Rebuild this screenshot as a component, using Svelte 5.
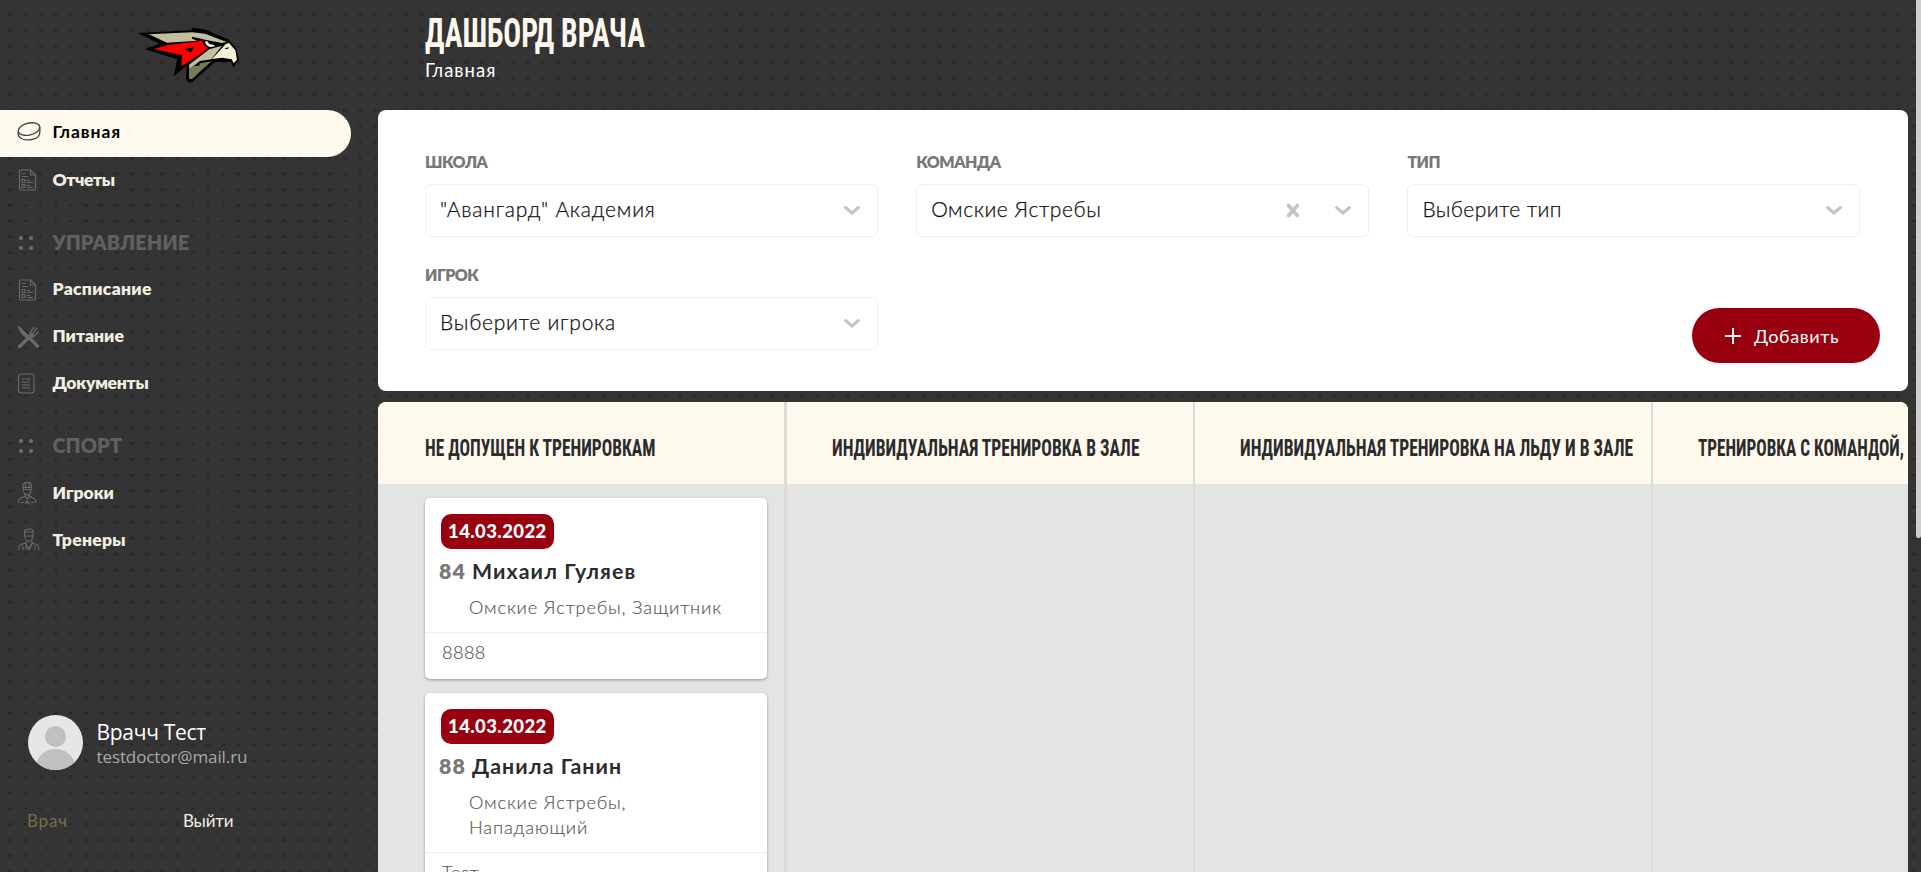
<script>
  const main = [
    { icon: 'puck', label: 'Главная', track: 0.95, active: true },
    { icon: 'report', label: 'Отчеты', track: -0.4 }
  ];
  const groups = [
    { title: 'УПРАВЛЕНИЕ', items: [
      { icon: 'report', label: 'Расписание', track: 0.3 },
      { icon: 'food', label: 'Питание', track: 0 },
      { icon: 'doc', label: 'Документы', track: -0.25 }
    ] },
    { title: 'СПОРТ', items: [
      { icon: 'player', label: 'Игроки', track: 0 },
      { icon: 'coach', label: 'Тренеры', track: 0.3 }
    ] }
  ];
  const filters = [
    { label: 'ШКОЛА', value: '"Авангард" Академия', track: 0.8 },
    { label: 'КОМАНДА', value: 'Омские Ястребы', track: 0.55 },
    { label: 'ТИП', value: 'Выберите тип', track: 0.4 },
    { label: 'ИГРОК', value: 'Выберите игрока', track: 0.75 }
  ];
  filters[1].clear = true;
  const columns = [
    { title: 'НЕ ДОПУЩЕН К ТРЕНИРОВКАМ', text: 230.5, width: 409, cards: [
      { date: '14.03.2022', number: 84, name: 'Михаил Гуляев', info: 'Омские Ястребы, Защитник', note: '8888' },
      { date: '14.03.2022', number: 88, name: 'Данила Ганин', info: 'Омские Ястребы, Нападающий', note: 'Тест' }
    ] },
    { title: 'ИНДИВИДУАЛЬНАЯ ТРЕНИРОВКА В ЗАЛЕ', text: 307.5, width: 408, cards: [] },
    { title: 'ИНДИВИДУАЛЬНАЯ ТРЕНИРОВКА НА ЛЬДУ И В ЗАЛЕ', text: 393, width: 458, cards: [] },
    { title: 'ТРЕНИРОВКА С КОМАНДОЙ,', text: 206, width: 255, cards: [] }
  ];
</script>

{#snippet icon(name)}
  <svg class="icon" viewBox="0 0 24 24" width="24" height="24" fill="none" stroke="currentColor" stroke-width="1.1">
    {#if name === 'puck'}
      <g stroke="#444" stroke-width="1.3">
        <ellipse cx="12" cy="9.1" rx="11" ry="6" transform="rotate(-13 12 9.1)" />
        <path d="M1.2 11.5c-.3 2.5.2 5 2.3 6.5 5 3.5 16 2 18.5-2.500 1.400-2.500 1-5 .8-8.500" />
      </g>
    {:else if name === 'report'}
      <path d="M3.500 2h10l5 5v13.500a1.500 1.500 0 0 1-1.500 1.500h-13a1.500 1.500 0 0 1-1.500-1.500v-17a1.500 1.500 0 0 1 1-1.500zM13.500 2v5h5M5 5.500h4M5 8.500h6M10 12.500h3M10 14.500h6M10 17.500h3M10 19.500h6" />
      <path d="M5 11.500h3v3h-3zM5 16.500h3v3h-3z" />
    {:else if name === 'food'}
      <path d="M1 1.500c1.500 4.500 4.500 8.500 9 12l3-1.500L2 1.500z" fill="currentColor" stroke-width=".8" />
      <path d="M13 13.500l7.500 7.500M13 11.500L2.500 21.500" stroke-width="3.200" stroke-linecap="round" />
      <path d="M12.800 8l4.500-6M15.500 9l4.500-6M17 11.500l5-5" stroke-width="1.300" />
      <path d="M12.800 8.200l3.800 3.800" stroke-width="3" />
    {:else if name === 'doc'}
      <rect x="1.500" y="2" width="15.500" height="19" rx="3" />
      <path d="M5 7h8M5 10h8M5 13h8M5 16h8" />
    {:else if name === 'player'}
      <path d="M6 6.500v-2q0-2.500 2.500-3h3.500q2.500.5 2.500 3v2zM8.500 2v4M12 2v4M6 8.500h8.500M6.500 6.500v3q.5 4 4 4.500q3-.5 3.500-4.500v-3M8 13v2.500M12.500 13v2.500M1.500 22v-2q0-2.500 6-4.500l2.700 2l2.500-2q6 2 6 4.500v2M4 21.500h3M14 21.500h3M8.500 22l1.700-2.500l2 2.500z" />
    {:else if name === 'coach'}
      <path d="M7.500 8v-5q1-2 4.500-2t4 2v5q0 4-4 5.500q-4-1.500-4.500-5.500M7.500 4h8.500M7.500 8h8.500M9 13v2.500M15 13v2.500M1.500 22q0-5 3-5.500l4-1.500l3 6l3.500-6l4 1.500q3 .5 3 5.500M6 22v-4M18 22v-4M9 16v6M15 16l-3 6" />
    {/if}
  </svg>
{/snippet}

{#snippet item(it)}
  <a class="item" class:active={it.active}>{@render icon(it.icon)}<span style="letter-spacing: {it.track}px">{it.label}</span></a>
{/snippet}

<div class="page">
  <svg class="dots" width="1921" height="872">
    <defs>
      <pattern id="mesh" x="2.400" y="6.800" width="15.230" height="15.870" patternUnits="userSpaceOnUse">
        <ellipse cx="7.600" cy="7.900" rx="2.300" ry="1.500" fill="#292929" />
      </pattern>
    </defs>
    <rect width="1921" height="872" fill="url(#mesh)" />
  </svg>

  <aside>
    <div class="logo">
      <svg viewBox="0 0 420 270" width="140" height="90">
        <path d="M53 69L215 61L217 53L252 58L325 88L348 113L357 150L340 173L333 156L285 156L218 215Q205 222 198 208L200 168L161 199L172 148L74 118L118 101Z" fill="#000" />
        <path d="M86 73L216 67L255 71L320 96L306 99L255 89L217 80L216 86L232 92L141 98Z" fill="#c2bf9f" />
        <path d="M102 117L140 106L247 92L254 108L264 114L240 133L184 169L186 136Z" fill="#f00" />
        <path d="M190 118L222 112L213 128L203 121Z" fill="#000" />
        <path d="M207 164L268 118L306 107L274 148L240 153L208 178Z" fill="#c2bf9f" />
        <path d="M207 178L217 169L237 167L240 160L274 154L217 206Q209 210 207 203Z" fill="#767b57" />
        <path d="M255 94L262 94L268 103L280 104L286 109L270 111Q256 107 255 94Z" fill="#fff" />
        <path d="M276 147L318 101L327 99L346 121L351 149L341 160L335 148L306 143Z" fill="#f1efd6" />
        <path d="M313 115l14-3l-5 6z" fill="#000" />
      </svg>
    </div>
    <nav>
      {#each main as it}{@render item(it)}{/each}
      {#each groups as g}
        <div class="group">
          <svg class="icon" viewBox="0 0 24 24" width="24" height="24" fill="#6d6d6d">
            <circle cx="4" cy="7" r="2.100" /><circle cx="14" cy="7" r="2.100" /><circle cx="4" cy="17" r="2.100" /><circle cx="14" cy="17" r="2.100" />
          </svg>
          <span>{g.title}</span>
        </div>
        {#each g.items as it}{@render item(it)}{/each}
      {/each}
    </nav>
    <div class="user">
      <svg width="55" height="55" viewBox="0 0 55 55">
        <clipPath id="round"><circle cx="27.500" cy="27.500" r="27.500" /></clipPath>
        <g clip-path="url(#round)">
          <rect width="55" height="55" fill="#e6e6e6" />
          <circle cx="27.500" cy="21.500" r="10.500" fill="#c0c0c0" />
          <ellipse cx="27.500" cy="52" rx="19.500" ry="18" fill="#c0c0c0" />
        </g>
      </svg>
      <div class="who"><span class="name">Врачч Тест</span><span class="mail">testdoctor@mail.ru</span></div>
    </div>
    <div class="foot"><span class="role">Врач</span><span class="exit">Выйти</span></div>
  </aside>

  <main>
    <header>
      <svg class="title" width="224" height="42"><text x="0" y="33" textLength="220" lengthAdjust="spacingAndGlyphs">ДАШБОРД ВРАЧА</text></svg>
      <div class="crumb"><span>Главная</span></div>
    </header>

    <section class="filters">
      {#each filters as f}
        <div class="field">
          <div class="label">{f.label}</div>
          <div class="select">
            <span style="letter-spacing: {f.track}px">{f.value}</span>
            {#if f.clear}
              <svg class="clear" width="14" height="15" viewBox="0 0 14 15"><path d="M2.500 2.500l9 10M11.500 2.500l-9 10" /></svg>
            {/if}
            <svg width="18" height="11" viewBox="0 0 18 11"><path d="M2.500 2.500l6.500 5.500l6.500-5.500" /></svg>
          </div>
        </div>
      {/each}
      <button>
        <svg width="16" height="16" viewBox="0 0 16 16"><path d="M8 0v16M0 8h16" stroke="#fff" stroke-width="2" /></svg>
        <span>Добавить</span>
      </button>
    </section>

    <section class="board">
      {#each columns as c}
        <div class="column" style="width: {c.width}px">
          <h2><svg width={c.text} height="32"><text x="0" y="24" textLength={c.text} lengthAdjust="spacingAndGlyphs">{c.title}</text></svg></h2>
          <div class="cards">
            {#each c.cards as p}
              <article>
                <div class="top">
                  <div class="date">{p.date}</div>
                  <div class="person"><span class="num">{p.number}</span><span>{p.name}</span></div>
                  <div class="info">{p.info}</div>
                </div>
                <div class="note">{p.note}</div>
              </article>
            {/each}
          </div>
        </div>
      {/each}
    </section>
  </main>
  <div class="scroll"></div>
</div>

<style>
  :global(body) { margin: 0; overflow: hidden; background: #343434; }
  .page {
    position: relative; display: flex; width: 1921px; height: 872px; overflow: hidden;
    background: #343434; font-family: Lato, 'Open Sans', sans-serif; color: #2b2b2b;
  }
  .page * { box-sizing: border-box; }
  svg { display: block; flex: none; overflow: visible; }
  span { white-space: nowrap; }
  .dots { position: absolute; inset: 0; }
  aside { position: relative; width: 378px; height: 872px; display: flex; flex-direction: column; }
  .logo { height: 110px; padding: 10px 0 0 120px; }
  .item { display: flex; align-items: center; gap: 11.500px; height: 46.800px; width: 351px; padding-left: 17px; color: #6a6a6a; }
  .item span { color: #f3eee2; font-size: 17.500px; font-weight: 800; line-height: 24px; margin-top: -1px; }
  .active { background: #fff8ec; border-radius: 0 24px 24px 0; }
  .item.active span { color: #000; font-weight: 700; margin-top: -2px; }
  .active .icon { margin-top: -2px; }
  .group { display: flex; align-items: center; gap: 11.500px; height: 63px; padding: 16px 0 0 17px; }
  .group span { color: #606060; font-size: 20px; font-weight: 800; line-height: 24px; margin-top: -2px; }
  .user { display: flex; gap: 13.500px; margin-top: auto; padding-left: 28px; height: 55px; }
  .who { display: flex; flex-direction: column; font-family: 'Open Sans', sans-serif; align-items: flex-start; }
  .name { color: #fff; font-size: 21px; line-height: 28px; margin-top: 3px; letter-spacing: -.3px; }
  .mail { color: #a9a9a9; font-size: 17px; line-height: 22px; letter-spacing: -.1px; }
  .foot { display: flex; height: 102px; padding: 39px 0 0 27px; font-size: 17px; line-height: 24px; }
  .role { width: 156px; color: #7d6a4f; letter-spacing: .8px; }
  .exit { color: #f3eee2; letter-spacing: -.2px; }

  main { position: relative; width: 1530px; }
  header { height: 110px; padding: 14px 0 0 47px; color: #fff; }
  .title text { font: 700 40.500px Roboto, sans-serif; font-stretch: 75%; fill: #fff8ec; }
  .crumb { font-size: 18.500px; line-height: 24px; margin-top: 2px; letter-spacing: 1px; }
  .filters {
    position: relative; height: 281px; border-radius: 8px; background: #fff; padding: 39px 47px 0;
    display: grid; grid-template-columns: repeat(3, 453px); column-gap: 38.200px; grid-auto-rows: 113px;
  }
  .label { height: 35px; font-size: 16px; font-weight: 800; line-height: 25px; color: #777; letter-spacing: -.5px; }
  .select { display: flex; align-items: center; height: 53px; border: 1px solid #f0f0f0; border-radius: 6px; padding: 0 16px 0 14px; }
  .select span { margin: -3px auto 0 0; font-size: 21px; font-weight: 300; color: #111; line-height: 26px; -webkit-text-stroke: .25px #111; }
  .select path { stroke: #c4c4c4; stroke-width: 3; fill: none; stroke-linecap: round; }
  .clear path { stroke-width: 3.600; }
  .clear { margin-right: 34px; }
  button {
    position: absolute; right: 28px; bottom: 28px; width: 188px; height: 55px; border: 0; border-radius: 28px;
    background: #99000f; color: #fff; display: flex; align-items: center; gap: 13px; padding: 0 0 0 33px;
    font: 18px Lato, 'Open Sans', sans-serif; letter-spacing: .6px;
  }
  button span { margin-top: 1px; }
  .board { margin-top: 11px; height: 470px; display: flex; overflow: hidden; border-radius: 8px 8px 0 0; background: #e4e4e4; }
  .column { flex: none; border-right: 2px solid #dddbd3; }
  .column:first-child { border-right-width: 3px; }
  .column:last-child { border-right: 0; }
  h2 { margin: 0; height: 82px; background: #fff8ec; padding: 30px 0 0 45px; font-weight: 400; }
  .column:first-child h2 { padding-left: 47px; }
  h2 text { font: 700 24.800px Roboto, sans-serif; font-stretch: 75%; fill: #2b2b2b; }
  .cards { padding: 14px 0 0 47px; display: flex; flex-direction: column; gap: 14px; }
  article { width: 342px; background: #fff; border-radius: 5px; box-shadow: 0 1px 3px rgba(0, 0, 0, .35); height: 181px; }
  article:last-child { height: 207px; }
  .top { padding: 16px 16px 0; border-bottom: 1px solid #eee; height: 135px; }
  article:last-child .top { height: 160px; }
  .date { width: 113px; height: 34.500px; border-radius: 10px; background: #99000f; color: #fff; font-size: 18.500px; font-weight: 900; line-height: 34px; padding-left: 7px; letter-spacing: .4px; }
  .person { display: flex; gap: 6px; margin: 8.500px 0 0 -2px; font-size: 21.300px; font-weight: 700; line-height: 28px; letter-spacing: 1.100px; }
  .num { color: #777; font-weight: 800; }
  .info { margin: 10px 0 0 28px; width: 256px; font-size: 18.200px; font-weight: 300; line-height: 25px; color: #555; letter-spacing: .85px; -webkit-text-stroke: .2px #666; }
  .note { padding: 6px 0 0 17px; font-size: 18.200px; font-weight: 300; line-height: 26px; color: #555; letter-spacing: .4px; -webkit-text-stroke: .2px #666; }
  .scroll { position: absolute; right: 0; top: 0; width: 5px; height: 538px; background: #cfcdce; border-radius: 0 0 3px 3px; }
</style>
